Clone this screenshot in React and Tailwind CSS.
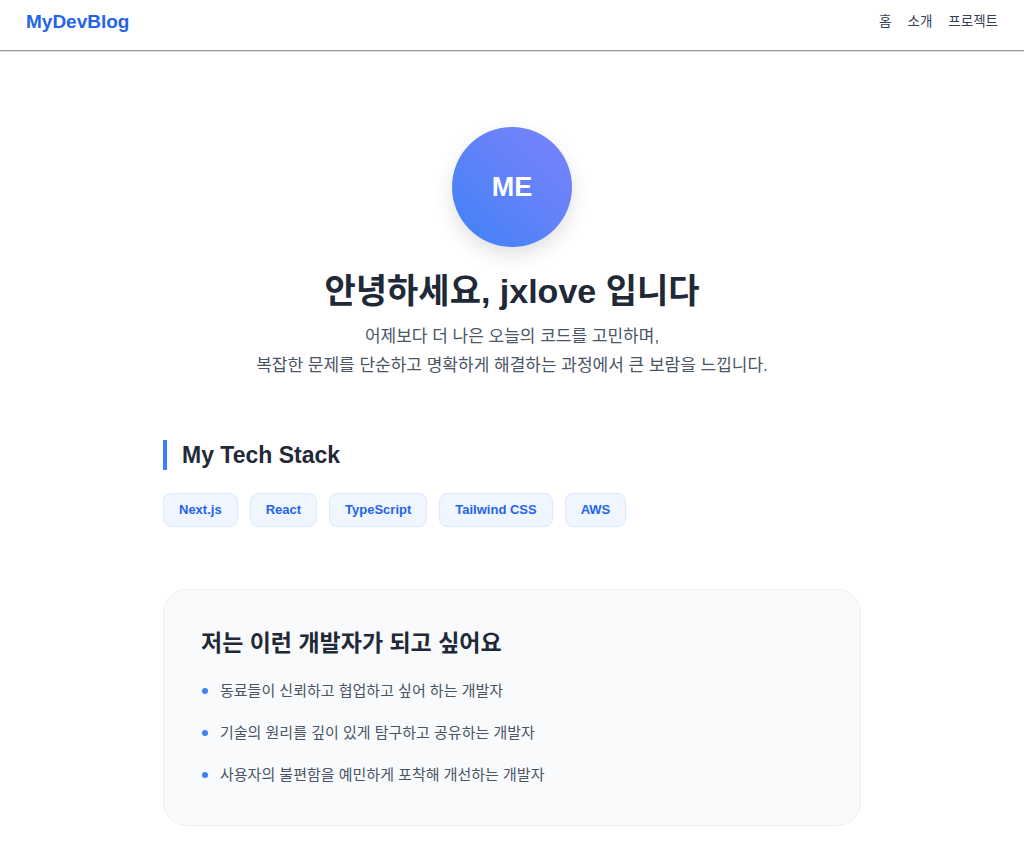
export default function App() {
    const stack = ['Next.js', 'React', 'TypeScript', 'Tailwind CSS', 'AWS'];
    const goals = [
        '동료들이 신뢰하고 협업하고 싶어 하는 개발자',
        '기술의 원리를 깊이 있게 탐구하고 공유하는 개발자',
        '사용자의 불편함을 예민하게 포착해 개선하는 개발자',
    ];

    return (
        <div className="min-h-screen bg-white font-['Liberation_Sans','Noto_Sans_CJK_KR',sans-serif]">
            {/* 헤더 */}
            <header className="flex h-[51px] items-center justify-between border-b border-[#9a9a9a] px-[26px] pb-[5px] shadow-[0_1px_0_#dcdcdc]">
                <span className="text-[19px] font-bold text-[#2563eb]">MyDevBlog</span>
                <nav className="flex gap-[16px] text-[13.5px] text-gray-700">
                    <span>홈</span>
                    <span>소개</span>
                    <span>프로젝트</span>
                </nav>
            </header>

            <main className="mx-auto w-[698px] pt-[76px] pb-10">
                {/* 프로필 */}
                <section className="flex flex-col items-center text-center">
                    <div className="flex h-[120px] w-[120px] items-center justify-center rounded-full bg-gradient-to-tr from-[#3b82f6] to-[#7b82fb] shadow-[0_8px_20px_rgba(0,0,0,0.12)]">
                        <span className="text-[27px] font-bold text-white">ME</span>
                    </div>
                    <h1 className="mt-[20px] text-[34px] font-bold leading-[48px] text-[#1f2937]">안녕하세요, jxlove 입니다</h1>
                    <p className="mt-[7px] text-[17px] leading-[29px] text-gray-600">
                        어제보다 더 나은 오늘의 코드를 고민하며,<br />
                        복잡한 문제를 단순하고 명확하게 해결하는 과정에서 큰 보람을 느낍니다.
                    </p>
                </section>

                {/* 기술 스택 */}
                <section className="mt-[60px]">
                    <h2 className="border-l-4 border-[#3b82f6] pl-[15px] text-[23px] font-bold leading-[30px] text-[#1f2937]">My Tech Stack</h2>
                    <div className="mt-[23px] flex flex-wrap gap-[12px]">
                        {stack.map(item => (
                            <span key={item} className="rounded-lg border border-[#dbeafe] bg-[#eff6ff] px-[15px] py-[8px] text-[13px] font-bold leading-[16px] text-[#2563eb]">
                                {item}
                            </span>
                        ))}
                    </div>
                </section>

                {/* 목표 */}
                <section className="mt-[62px] rounded-[24px] border border-[#eef0f3] bg-[#f8fafc] px-[37px] pt-[37px] pb-[39px]">
                    <h3 className="text-[23px] font-bold leading-[32px] text-[#1f2937]">저는 이런 개발자가 되고 싶어요</h3>
                    <ul className="mt-[20px] flex flex-col gap-[19px]">
                        {goals.map(goal => (
                            <li key={goal} className="flex items-center gap-[12px] text-[15px] leading-[23px] text-gray-600">
                                <span className="ml-[1px] h-[6px] w-[6px] rounded-full bg-[#3b82f6]" />
                                {goal}
                            </li>
                        ))}
                    </ul>
                </section>
            </main>
        </div>
    );
}
